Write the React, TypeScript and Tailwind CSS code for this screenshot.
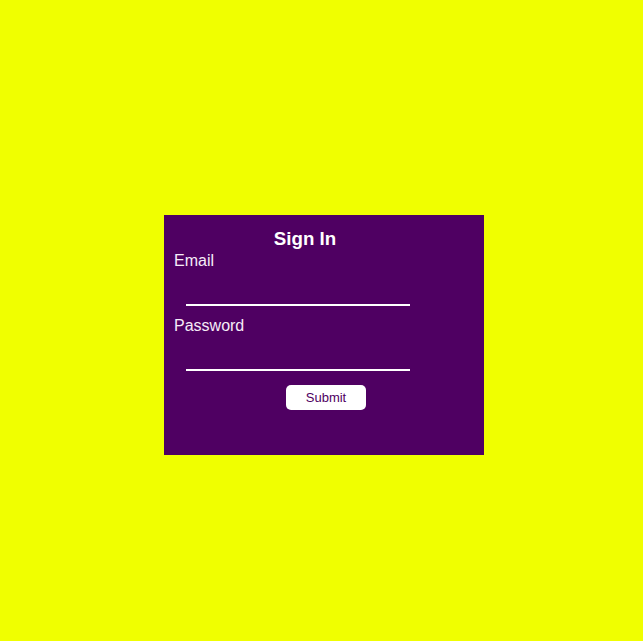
import React, { useState } from "react";

export default function App() {
  const [email, setEmail] = useState("");
  const [password, setPassword] = useState("");

  return (
    <div className="min-h-screen w-full bg-[#f0ff00] pl-[164px] pt-[215px] font-['Liberation_Sans',Arial,sans-serif]">
      <form
        className="flex h-[240px] w-[320px] flex-col bg-[#4f0062] pt-[13px] text-white"
        onSubmit={(e) => e.preventDefault()}
      >
        <h2 className="ml-[100px] w-[82px] whitespace-nowrap text-center text-[18.72px] leading-[22px] font-bold">Sign In</h2>
        <label className="ml-[10px] mt-[2px] h-[18px] text-[16px] leading-[18px] text-[#f6ecf8]">Email</label>
        <input
          type="email"
          value={email}
          onChange={(e) => setEmail(e.target.value)}
          className="ml-[22px] h-[36px] w-[224px] border-b-2 border-white bg-transparent text-white outline-none"
        />
        <label className="ml-[10px] mt-[11px] h-[18px] text-[16px] leading-[18px] text-[#f6ecf8]">Password</label>
        <input
          type="password"
          value={password}
          onChange={(e) => setPassword(e.target.value)}
          className="ml-[22px] h-[36px] w-[224px] border-b-2 border-white bg-transparent text-white outline-none"
        />
        <button
          type="submit"
          className="ml-[122px] mt-[14px] h-[25px] w-[80px] rounded-[5px] bg-white text-[13px] text-[#4f0062]"
        >
          Submit
        </button>
      </form>
    </div>
  );
}
